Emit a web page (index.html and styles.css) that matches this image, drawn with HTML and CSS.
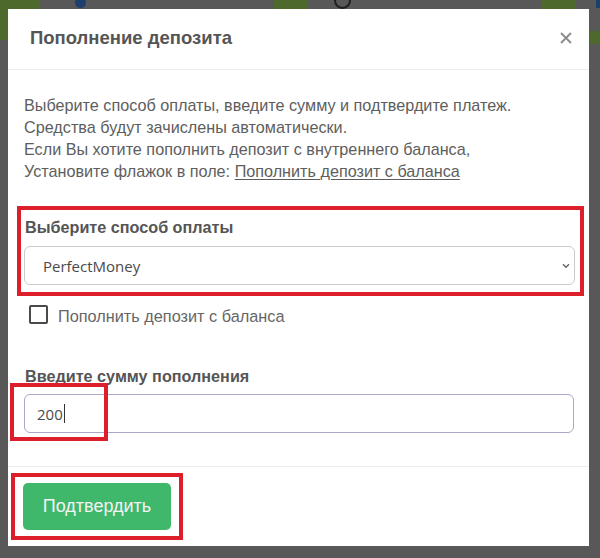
FILE: index.html
```html
<!DOCTYPE html>
<html lang="ru">
<head>
<meta charset="utf-8">
<title>Пополнение депозита</title>
<link rel="stylesheet" href="styles.css">
</head>
<body>
<div class="backdrop" aria-hidden="true">
  <span class="bg-green g1"></span>
  <span class="bg-green g2"></span>
  <span class="bg-green g3"></span>
  <span class="bg-green g4"></span>
  <span class="bg-green g5"></span>
  <span class="bg-dot"></span>
  <span class="bg-ring"></span>
  <span class="bg-blue"></span>
</div>
<div class="page">
  <div class="modal">
    <div class="modal-header">
      <h4 class="modal-title">Пополнение депозита</h4>
      <button class="close" type="button" aria-label="Закрыть">
        <svg width="12" height="12" viewBox="0 0 12 12"><path d="M1 1 L11 11 M11 1 L1 11" stroke="#8a8a8a" stroke-width="1.8" fill="none"/></svg>
      </button>
    </div>
    <div class="modal-body">
      <p class="intro">Выберите способ оплаты, введите сумму и подтвердите платеж.<br>Средства будут зачислены автоматически.<br>Если Вы хотите пополнить депозит с внутреннего баланса,<br>Установите флажок в поле: <u>Пополнить депозит с баланса</u></p>
      <div class="mark mark-select">
        <label class="field-label">Выберите способ оплаты</label>
        <div class="select">
          <span class="select-value">PerfectMoney</span>
          <svg class="chevron" width="8" height="6" viewBox="0 0 8 6"><path d="M1 1.2 L4 4.2 L7 1.2" stroke="#666" stroke-width="1.4" fill="none"/></svg>
        </div>
      </div>
      <div class="check-row">
        <span class="checkbox"></span>
        <span class="check-label">Пополнить депозит с баланса</span>
      </div>
      <div class="amount-group">
        <label class="field-label">Введите сумму пополнения</label>
        <div class="input"><span class="input-value">200</span><span class="caret"></span></div>
        <span class="mark-overlay"></span>
      </div>
    </div>
    <div class="modal-footer">
      <div class="mark mark-button">
        <button class="btn-confirm" type="button">Подтвердить</button>
      </div>
    </div>
  </div>
</div>
</body>
</html>
```

FILE: styles.css
```css
* { box-sizing: border-box; }
html, body { margin: 0; padding: 0; }
body {
  width: 600px;
  height: 558px;
  overflow: hidden;
  background: #585858;
  font-family: "Liberation Sans", Arial, sans-serif;
  position: relative;
}
.backdrop { position: absolute; inset: 0; }
.bg-green { position: absolute; background: #4d6a2c; }
.g1 { left: 0; top: 0; width: 40px; height: 9px; }
.g2 { left: 0; top: 0; width: 8px; height: 40px; }
.g3 { left: 274px; top: 0; width: 34px; height: 9px; }
.g4 { left: 541px; top: 0; width: 35px; height: 9px; }
.g5 { left: 589px; top: 31px; width: 11px; height: 13px; }
.bg-dot { position: absolute; left: 75px; top: -3px; width: 11px; height: 11px; border-radius: 50%; background: #1c3f6e; }
.bg-ring { position: absolute; left: 334px; top: -8px; width: 17px; height: 17px; border-radius: 50%; border: 2px solid #1f1f1f; }
.bg-blue { position: absolute; left: 596px; top: 0; width: 4px; height: 8px; background: #1c3f6e; }

.page {
  position: relative;
  padding: 9px 0 0 8px;
}
.modal {
  width: 581px;
  height: 537px;
  background: #fff;
  display: flex;
  flex-direction: column;
}
.modal-header {
  height: 61px;
  border-bottom: 1px solid #ececec;
  display: flex;
  align-items: center;
  justify-content: space-between;
  padding: 0 16px 2px 22px;
}
.modal-title {
  margin: 0;
  font-size: 18.5px;
  font-weight: bold;
  color: #555;
}
.close {
  border: 0;
  background: none;
  padding: 0;
  width: 14px;
  height: 14px;
  display: flex;
  align-items: center;
  justify-content: center;
}
.modal-body {
  flex: 1;
  padding: 24px 15px 0 16px;
}
.intro {
  margin: 0 0 24px;
  font-size: 16.2px;
  line-height: 22px;
  color: #5e5e5e;
}
.intro u { text-decoration-thickness: 1px; text-underline-offset: 2px; }
.mark { border: 4px solid #dc1f2b; }
.mark-select {
  margin: 0 -10px 0 -7px;
  padding: 7px 5px 7px 3px;
}
.field-label {
  display: block;
  font-size: 16.2px;
  line-height: 20px;
  font-weight: bold;
  color: #555;
  padding-left: 1px;
}
.select {
  margin-top: 9px;
  height: 39px;
  border: 1px solid #cbcbcb;
  border-radius: 6px;
  display: flex;
  align-items: center;
  justify-content: space-between;
  padding: 0 4px 0 18px;
}
.select-value, .input-value {
  font-family: "Open Sans", sans-serif;
  font-size: 15px;
  color: #4a4a4a;
}
.check-row {
  margin-top: 8px;
  display: flex;
  align-items: center;
  gap: 10px;
  padding-left: 5px;
  height: 20px;
}
.checkbox {
  width: 19px;
  height: 19px;
  border: 2px solid #4a4a4a;
  border-radius: 2px;
}
.check-label {
  font-size: 16.3px;
  color: #666;
  position: relative;
  top: 2px;
}
.amount-group {
  position: relative;
  margin-top: 42px;
}
.input {
  margin-top: 8px;
  height: 39px;
  border: 1px solid #aca7c6;
  border-radius: 6px;
  display: flex;
  align-items: center;
  padding-left: 12px;
}
.caret {
  display: inline-block;
  width: 1px;
  height: 19px;
  background: #333;
  margin-left: 1px;
}
.mark-overlay {
  position: absolute;
  left: -14px;
  top: 17px;
  width: 98px;
  height: 58px;
  border: 4px solid #dc1f2b;
}
.modal-footer {
  height: 80px;
  border-top: 1px solid #ececec;
  padding: 6px 0 0 3px;
}
.mark-button {
  width: 172px;
  height: 67px;
  padding: 6px 8px;
}
.btn-confirm {
  width: 148px;
  height: 47px;
  border: 0;
  border-radius: 5px;
  background: #3fb86b;
  color: #f4f4f4;
  font-family: "Liberation Sans", Arial, sans-serif;
  font-size: 18px;
}
```
